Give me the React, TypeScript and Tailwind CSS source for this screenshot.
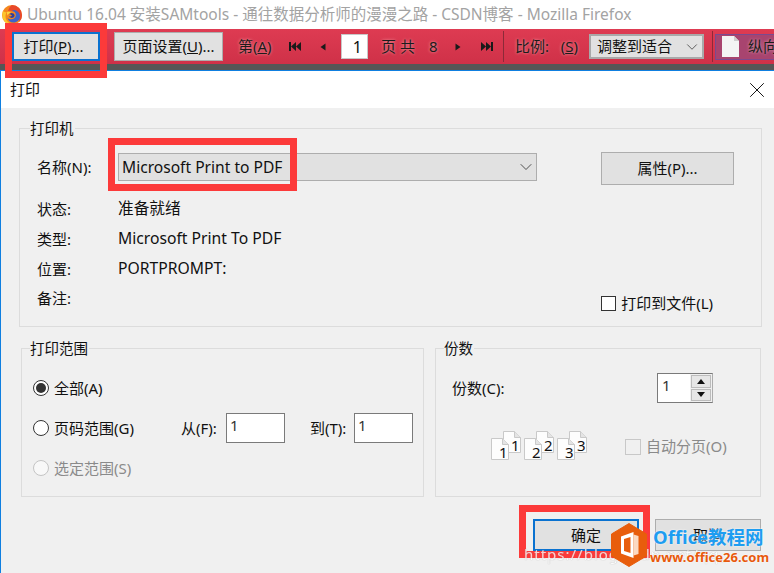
import React from "react";
import { ChevronDown, X } from "lucide-react";

const FONT = "font-['Noto_Sans','Noto_Sans_CJK_SC',sans-serif]";

const FirefoxLogo = () => (
  <svg width="20" height="20" viewBox="0 0 20 20" className="shrink-0">
    <circle cx="10" cy="10" r="10" fill="#f4881f" />
    <path d="M10 0A10 10 0 0 1 20 10C20 13 19 15 17 17C18 12 16 8 12 6.5C10 5.5 8 5.5 6 6C7 3 8 1 10 0Z" fill="#e8482a" />
    <path d="M1 6C0 9 0 12 1.5 15C3.5 19 8 20.5 12 19.5C7 19 3.5 15.5 3.5 11.5C3.5 9.5 4 8 5 7C3.5 7.5 2 7 1 6Z" fill="#fcc52e" />
    <path d="M13 5C16 6 18 8.5 18 11.5C18 15 15 17.5 11.5 17.5C8.5 17.5 6 15.5 5.5 13C7 14.5 10 14.8 12 13.5C14 12 14.5 9.5 13 7.5C12 6.2 10.5 6 9.5 6.5C11 5 12 4.8 13 5Z" fill="#3f63c9" />
    <path d="M7 9C8 7.8 10 7.5 11.5 8.5C13 9.5 13 11.5 11.5 12.5C10 13.3 8 13 7 11.5C8 11.8 9.5 11.5 10 10.5C9.2 9.7 8 9.2 7 9Z" fill="#2f3f9e" />
    <path d="M5 7C7 6.6 8 7 9 8C7.5 8 6 9 5.5 10.5C5 9.5 4.8 8.2 5 7Z" fill="#fdd23f" />
  </svg>
);

const Triangle = ({ dir }: { dir: "left" | "right" }) => (
  <svg width="6" height="8" viewBox="0 0 6 8" className="shrink-0">
    <path d={dir === "left" ? "M5.5 0.5V7.5L0.5 4Z" : "M0.5 0.5V7.5L5.5 4Z"} fill="#1a1a1a" />
  </svg>
);

const SkipIcon = ({ dir }: { dir: "left" | "right" }) => (
  <svg width="12" height="9" viewBox="0 0 12 9" className="shrink-0">
    {dir === "left" ? (
      <path d="M0 0H2V9H0ZM7 0V9L2 4.5ZM12 0V9L7 4.5Z" fill="#1a1a1a" />
    ) : (
      <path d="M0 0V9L5 4.5ZM5 0V9L10 4.5ZM10 0H12V9H10Z" fill="#1a1a1a" />
    )}
  </svg>
);

const Group = ({
  title,
  className,
  legendLeft,
  children,
}: {
  title: string;
  className: string;
  legendLeft: string;
  children: React.ReactNode;
}) => (
  <div className={`relative border border-[#dcdcdc] ${className}`}>
    <span className={`absolute top-[-11px] bg-[#f0f0f0] pr-[1px] text-[14.5px] leading-[20px] text-[#111] ${legendLeft}`}>
      {title}
    </span>
    {children}
  </div>
);

const InfoRow = ({ label, value }: { label: string; value?: string }) => (
  <div className="flex h-[30px] items-center text-[15px] text-[#111]">
    <span className="w-[81px]">{label}</span>
    <span className="text-[15.7px]">{value}</span>
  </div>
);

const Radio = ({ checked, disabled, label }: { checked?: boolean; disabled?: boolean; label: string }) => (
  <div className={`flex items-center gap-[5px] whitespace-nowrap text-[15px] ${disabled ? "text-[#8a8a8a]" : "text-[#111]"}`}>
    <span
      className={`flex h-[16px] w-[16px] items-center justify-center rounded-full border ${
        disabled ? "border-[#c4c4c4] bg-[#f8f8f8]" : "border-[#333] bg-white"
      }`}
    >
      {checked && <span className="h-[10px] w-[10px] rounded-full bg-[#333]" />}
    </span>
    {label}
  </div>
);

const NumBox = () => (
  <div className="flex h-[30px] w-[59px] border border-[#7a7a7a] bg-white pl-[3px] text-[15px] leading-[22px] text-[#333]">
    1
  </div>
);

const DocIcon = ({ n }: { n: number }) => {
  const page = (x: number, y: number, tx: number, ty: number) => (
    <g>
      <path
        d={`M${x} ${y}H${x + 11}L${x + 17} ${y + 6}V${y + 21}H${x}Z`}
        fill="#fdfdfd"
        stroke="#c9c9c9"
        strokeWidth="1"
      />
      <path d={`M${x + 11} ${y}V${y + 6}H${x + 17}`} fill="#e4e4e4" stroke="#c9c9c9" strokeWidth="1" />
      <text x={tx} y={ty} fontSize="15" fill="#111" fontFamily="Noto Sans">
        {n}
      </text>
    </g>
  );
  return (
    <svg width="31" height="30" viewBox="0 0 31 30" className="shrink-0">
      {page(12.5, 0.5, 20, 20)}
      {page(0.5, 7.5, 8, 27)}
    </svg>
  );
};

const OfficeLogo = () => (
  <svg width="36" height="44" viewBox="0 0 36 44" className="shrink-0">
    <path d="M18 0.5L35.5 11V33L18 43.5L0.5 33V11Z" fill="#e85d0c" stroke="#e85d0c" strokeLinejoin="round" />
    <path d="M10 13.5L22.5 9V35L10 30.5ZM13 16V28L19.5 30V14Z" fill="#fff" />
    <path d="M22.5 11.5L27.5 13V31L22.5 32.5Z" fill="#fbd9c2" />
  </svg>
);

export default function App() {
  return (
    <div className={`relative flex h-[573px] w-[774px] flex-col overflow-hidden bg-white ${FONT}`}>
      {/* firefox title */}
      <div className="flex h-[29px] items-center bg-white pl-[2px] pt-[1px]">
        <FirefoxLogo />
        <span className="ml-[5px] whitespace-nowrap text-[15.5px] text-[#a3a3a3]">
          Ubuntu 16.04 安装SAMtools - 通往数据分析师的漫漫之路 - CSDN博客 - Mozilla Firefox
        </span>
      </div>

      {/* print preview toolbar */}
      <div className="flex h-[35px] items-center bg-gradient-to-b from-[#de3b52] to-[#cf3148] text-[15px] text-[#1c1c1c] [text-shadow:0_0_3px_rgba(255,210,210,0.7)]">
        <button className="ml-[12px] h-[29px] w-[88px] shrink-0 border-2 border-[#0a72d0] bg-[#e1e1e1] pr-[5px] text-[15px] text-[#111] [text-shadow:none]">
          打印(<u>P</u>)...
        </button>
        <button className="ml-[14px] h-[29px] w-[109px] shrink-0 border border-[#adadad] bg-[#e1e1e1] text-[15px] text-[#111] [text-shadow:none]">
          页面设置(<u>U</u>)...
        </button>
        <span className="ml-[15px] w-[36px] shrink-0 whitespace-nowrap">
          第(<u>A</u>)
        </span>
        <span className="ml-[15px] shrink-0">
          <SkipIcon dir="left" />
        </span>
        <span className="ml-[19px] shrink-0">
          <Triangle dir="left" />
        </span>
        <div className="ml-[15px] flex h-[25px] w-[27px] shrink-0 items-center justify-end border border-[#c8c8c8] bg-white pr-[5px] text-[16px] text-[#111] [text-shadow:none]">
          1
        </div>
        <span className="ml-[13px] w-[34px] shrink-0 whitespace-nowrap">页 共</span>
        <span className="ml-[14px] w-[9px] shrink-0">8</span>
        <span className="ml-[17px] shrink-0">
          <Triangle dir="right" />
        </span>
        <span className="ml-[20px] shrink-0">
          <SkipIcon dir="right" />
        </span>
        <div className="ml-[10px] h-[31px] w-[1px] shrink-0 bg-[#8c2a38]" />
        <span className="ml-[11px] flex w-[63px] shrink-0 justify-between whitespace-nowrap">
          <span>比例:</span>
          <span>
            (<u>S</u>)
          </span>
        </span>
        <div className="ml-[11px] flex h-[25px] w-[115px] shrink-0 items-center border-2 border-[#a9a9a9] bg-[#e1e1e1] pl-[6px] text-[15px] text-[#111] [text-shadow:none]">
          <span className="whitespace-nowrap">调整到适合</span>
          <ChevronDown size={18} strokeWidth={1} className="ml-auto mr-[1px] text-[#333]" />
        </div>
        <div className="ml-[8px] h-[31px] w-[1px] shrink-0 bg-[#8c2a38]" />
        <div className="ml-[2px] flex h-[26px] min-w-0 flex-1 items-center gap-[9px] overflow-hidden border border-r-0 border-[#7a4a90] bg-[#a8446f] pl-[6px]">
          <svg width="17" height="21" viewBox="0 0 17 21" className="shrink-0">
            <path d="M0 0H12L17 5V21H0Z" fill="#f4f4f4" />
            <path d="M12 0V5H17Z" fill="#cfcfcf" />
          </svg>
          <span className="whitespace-nowrap">纵向</span>
        </div>
      </div>
      <div className="h-[6px] bg-[#565656]" />

      {/* dialog */}
      <div className="flex flex-1 flex-col border-l border-t border-[#0f7fe0] bg-white">
        <div className="flex h-[37px] items-center justify-between pl-[9px] pr-[4px] text-[15px] text-[#111]">
          打印
          <X size={26} strokeWidth={0.9} className="text-[#111]" />
        </div>
        <div className="flex-1 bg-[#f0f0f0] pl-[18px] pr-[12px] pt-[20px]">
          <Group title="打印机" legendLeft="left-[10px]" className="h-[199px] w-[743px] pl-[17px] pr-[27px] pt-[24px]">
            <div className="flex items-start text-[15px] text-[#111]">
              <span className="mt-[3px] w-[81px]">名称(N):</span>
              <div className="flex h-[28px] w-[419px] items-center border border-[#adadad] bg-[#e1e1e1] pl-[3px] text-[15.6px]">
                <span className="mt-[1px]">Microsoft Print to PDF</span>
                <ChevronDown size={20} strokeWidth={1} className="ml-auto text-[#333]" />
              </div>
              <button className="ml-auto mt-[-1px] h-[33px] w-[133px] border border-[#adadad] bg-[#e1e1e1] text-[15px]">
                属性(P)...
              </button>
            </div>
            <div className="mt-[9px]">
              <InfoRow label="状态:" value="准备就绪" />
              <InfoRow label="类型:" value="Microsoft Print To PDF" />
              <InfoRow label="位置:" value="PORTPROMPT:" />
              <div className="mt-[-1px] flex items-start justify-between">
                <InfoRow label="备注:" />
                <div className="mr-[21px] mt-[9px] flex items-center gap-[5px] whitespace-nowrap text-[15px] text-[#111]">
                  <span className="h-[15px] w-[15px] shrink-0 border border-[#333] bg-white" />
                  打印到文件(L)
                </div>
              </div>
            </div>
          </Group>

          <div className="mt-[21px] flex items-start pl-[2px]">
            <Group title="打印范围" legendLeft="left-[8px]" className="flex h-[149px] w-[403px] flex-col gap-[10px] pl-[11px] pt-[24px]">
              <div className="flex h-[30px] items-center">
                <Radio checked label="全部(A)" />
              </div>
              <div className="flex h-[30px] items-center">
                <div className="w-[148px]">
                  <Radio label="页码范围(G)" />
                </div>
                <span className="w-[45px] whitespace-nowrap text-[15px] text-[#111]">从(F):</span>
                <NumBox />
                <span className="ml-[25px] w-[44px] whitespace-nowrap text-[15px] text-[#111]">到(T):</span>
                <NumBox />
              </div>
              <div className="flex h-[30px] items-center">
                <Radio disabled label="选定范围(S)" />
              </div>
            </Group>
            <Group title="份数" legendLeft="left-[8px]" className="ml-[11px] h-[149px] w-[326px] pl-[16px] pr-[47px] pt-[24px]">
              <div className="flex items-center text-[15px] text-[#111]">
                <span className="mt-[1px]">份数(C):</span>
                <div className="ml-auto flex h-[30px] w-[56px] border border-[#7a7a7a] border-r-[#adadad] bg-white pl-[4px] leading-[22px] text-[#333]">
                  1
                  <div className="ml-auto flex w-[22px] flex-col gap-[1px] bg-[#f0f0f0] p-[1px] text-[8px] leading-none">
                    <span className="flex flex-1 items-center justify-center border border-[#bcbcbc] bg-[#e6e6e6]">
                      <span className="h-0 w-0 border-x-[4px] border-b-[5px] border-x-transparent border-b-[#111]" />
                    </span>
                    <span className="flex flex-1 items-center justify-center border border-[#bcbcbc] bg-[#e6e6e6]">
                      <span className="h-0 w-0 border-x-[4px] border-t-[5px] border-x-transparent border-t-[#111]" />
                    </span>
                  </div>
                </div>
              </div>
              <div className="ml-[39px] mt-[28px] flex items-center">
                <div className="flex shrink-0 gap-[2px]">
                  <DocIcon n={1} />
                  <DocIcon n={2} />
                  <DocIcon n={3} />
                </div>
                <span className="ml-[37px] mt-[1px] h-[16px] w-[16px] shrink-0 border border-[#c8c8c8] bg-[#f0f0f0]" />
                <span className="ml-[5px] shrink-0 whitespace-nowrap text-[15px] text-[#8a8a8a]">自动分页(O)</span>
              </div>
            </Group>
          </div>

          <div className="mt-[22px] flex justify-end gap-[16px] pr-[1px]">
            <button className="h-[32px] w-[106px] border-2 border-[#0a72d0] bg-[#e1e1e1] text-[15px] text-[#111]">确定</button>
            <button className="h-[32px] w-[106px] border border-[#adadad] bg-[#e1e1e1] text-[15px] text-[#111]">取消</button>
          </div>
        </div>
      </div>

      {/* red annotation boxes */}
      <div className="absolute left-[5px] top-[23px] h-[55px] w-[102px] border-[7px] border-[#fc3a3a]" />
      <div className="absolute left-[108px] top-[138px] h-[53px] w-[189px] border-[7px] border-[#fc3a3a]" />
      <div className="absolute left-[519px] top-[505px] h-[53px] w-[131px] border-[7px] border-[#fc3a3a]" />

      {/* blog and site watermarks */}
      <span className="absolute left-[524px] top-[544px] whitespace-nowrap text-[15px] leading-[20px] tracking-[1px] text-white opacity-75 [text-shadow:0_0_1px_#888]">
        https://blog.csdn.net/qq_
      </span>
      <div className="absolute left-[611px] top-[523px] flex items-center">
        <OfficeLogo />
        <div className="ml-[3px] flex flex-col">
          <span className="ml-[3px] whitespace-nowrap text-[18.5px] font-bold leading-[24px] text-[#1e9df1] [text-shadow:0_0_2px_#fff]">
            Office教程网
          </span>
          <span className="whitespace-nowrap text-[13px] font-bold leading-[16px] text-[#e8590c] [text-shadow:0_0_2px_#fff]">
            www.office26.com
          </span>
        </div>
      </div>
    </div>
  );
}
